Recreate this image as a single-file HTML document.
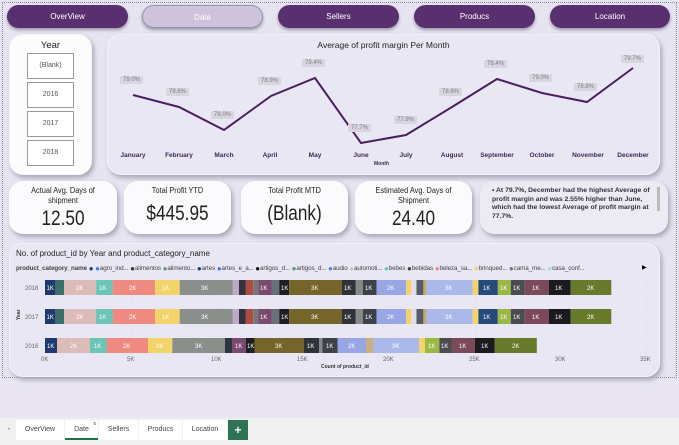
<!DOCTYPE html>
<html><head><meta charset="utf-8"><style>
*{margin:0;padding:0;box-sizing:border-box}
body{width:679px;height:445px;overflow:hidden;background:#e7e4f1;font-family:"Liberation Sans",sans-serif;position:relative}
.abs{position:absolute}
.page{left:2px;top:2px;width:675px;height:376px;border:1px dotted #8a8a95}
.nav{top:5px;height:23px;border-radius:12px;background:#592f6f;color:#fff;font-size:8px;text-align:center;line-height:23px;box-shadow:0 2px 3px #9a96a8}
.card{background:#eae7f4;border-radius:14px;box-shadow:2px 3px 5px #a9a6b6;border:1px solid #f4f3f9}
.kpi{background:#fbfbfd;border-radius:14px;box-shadow:2px 3px 5px #a9a6b6;top:181px;height:53px;text-align:center;color:#222}
.kpi .t{font-size:8px;margin-top:5px;line-height:10px;transform:scaleX(0.92)}
.kpi .v{font-size:21px;position:absolute;left:0;right:0;transform:scaleX(0.82)}
.yb{left:27px;width:47px;height:26px;border:1px solid #9a9a9a;background:#fff;font-size:7px;color:#555;text-align:center;line-height:24px}
.lbl{background:#d8d5df;color:#7a7a80;font-size:6px;padding:1px 3px;border-radius:1px}
.mon{font-size:6.5px;font-weight:bold;color:#3a2a55;top:152px;width:50px;text-align:center}
.tab{top:420px;height:20px;background:#fff;font-size:7px;color:#444;text-align:center;line-height:20px}
.lg{font-size:6.3px;color:#444;white-space:nowrap;letter-spacing:-0.1px}
.lg i{font-style:normal;font-size:8px;vertical-align:-1px}
</style></head><body>
<div class="abs" style="left:0;top:380px;width:679px;height:40px;background:#e9e6f2"></div>
<div class="abs" style="left:0;top:418px;width:679px;height:27px;background:#f1f0f0"></div>
<div class="abs page"></div>

<div class="abs nav" style="left:7px;width:121px">OverView</div>
<div class="abs nav" style="left:142px;width:121px;background:#cfc3dc;border:1px solid #8c9ab0">Date</div>
<div class="abs nav" style="left:278px;width:121px">Sellers</div>
<div class="abs nav" style="left:414px;width:121px">Producs</div>
<div class="abs nav" style="left:550px;width:120px">Location</div>

<div class="abs card" style="left:9px;top:34px;width:83px;height:141px;background:#fcfcfd">
<div style="text-align:center;font-size:9.5px;margin-top:5px;color:#222">Year</div></div>
<div class="abs yb" style="top:53px">(Blank)</div>
<div class="abs yb" style="top:82px">2016</div>
<div class="abs yb" style="top:111px">2017</div>
<div class="abs yb" style="top:140px">2018</div>

<div class="abs card" style="left:107px;top:34px;width:553px;height:141px"></div>
<div class="abs" style="left:107px;width:553px;top:40px;text-align:center;font-size:8.5px;color:#222">Average of profit margin Per Month</div>
<svg class="abs" style="left:0;top:0" width="679" height="180">
<polyline fill="none" stroke="#4a1f60" stroke-width="2" points="133,95 179,107 224,130 271,96 315,78 361,143 406,135 452,107 497,79 542,93 587,102 633,68"/>
</svg>
<div class="abs lbl" style="left:120px;top:76px">79.0%</div>
<div class="abs lbl" style="left:166px;top:88px">78.6%</div>
<div class="abs lbl" style="left:211px;top:111px">78.0%</div>
<div class="abs lbl" style="left:258px;top:77px">78.9%</div>
<div class="abs lbl" style="left:302px;top:59px">79.4%</div>
<div class="abs lbl" style="left:348px;top:124px">77.7%</div>
<div class="abs lbl" style="left:394px;top:116px">77.9%</div>
<div class="abs lbl" style="left:439px;top:88px">78.6%</div>
<div class="abs lbl" style="left:484px;top:60px">79.4%</div>
<div class="abs lbl" style="left:529px;top:74px">79.0%</div>
<div class="abs lbl" style="left:574px;top:83px">78.8%</div>
<div class="abs lbl" style="left:621px;top:55px">79.7%</div>
<div class="abs mon" style="left:108px">January</div>
<div class="abs mon" style="left:154px">February</div>
<div class="abs mon" style="left:199px">March</div>
<div class="abs mon" style="left:245px">April</div>
<div class="abs mon" style="left:290px">May</div>
<div class="abs mon" style="left:336px">June</div>
<div class="abs mon" style="left:381px">July</div>
<div class="abs mon" style="left:427px">August</div>
<div class="abs mon" style="left:472px">September</div>
<div class="abs mon" style="left:517px">October</div>
<div class="abs mon" style="left:563px">November</div>
<div class="abs mon" style="left:608px">December</div>
<div class="abs" style="left:374px;top:161px;font-size:5px;font-weight:bold;color:#3a2a55">Month</div>

<div class="abs kpi" style="left:9px;width:108px"><div class="t">Actual Avg. Days of<br>shipment</div><div class="v" style="top:26px">12.50</div></div>
<div class="abs kpi" style="left:124px;width:107px"><div class="t">Total Profit YTD</div><div class="v" style="top:21px">$445.95</div></div>
<div class="abs kpi" style="left:241px;width:107px"><div class="t">Total Profit MTD</div><div class="v" style="top:21px">(Blank)</div></div>
<div class="abs kpi" style="left:355px;width:117px"><div class="t">Estimated Avg. Days of<br>Shipment</div><div class="v" style="top:26px">24.40</div></div>
<div class="abs kpi" style="left:480px;width:188px;background:#eceaf3;text-align:left">
<div style="font-size:6.8px;font-weight:bold;color:#333;line-height:8.5px;margin:6px 18px 0 12px">• At 79.7%, December had the highest Average of profit margin and was 2.55% higher than June, which had the lowest Average of profit margin at 77.7%.</div>
<div class="abs" style="right:8px;top:6px;width:3px;height:24px;background:#bbb"></div></div>

<div class="abs card" style="left:9px;top:243px;width:651px;height:134px"></div>
<div class="abs" style="left:16px;top:249px;font-size:8px;color:#222">No. of product_id by Year and product_category_name</div>
<div class="abs lg" style="left:16px;top:264px"><b>product_category_name</b> <i style="color:#1f3b6e">●</i> <i style="color:#3b7be8">●</i>agro_ind... <i style="color:#333">●</i>alimentos <i style="color:#5a9a6a">●</i>alimento... <i style="color:#1f3b6e">●</i>artes <i style="color:#3b7be8">●</i>artes_e_a... <i style="color:#111">●</i>artigos_d... <i style="color:#5a9a6a">●</i>artigos_d... <i style="color:#5b84c4">●</i>audio <i style="color:#dcbcb8">●</i>automoti... <i style="color:#6cc6b8">●</i>bebes <i style="color:#444">●</i>bebidas <i style="color:#ee8a80">●</i>beleza_sa... <i style="color:#f2d46a">●</i>brinqued... <i style="color:#777">●</i>cama_me... <i style="color:#a8d8e8">●</i>casa_conf...</div>
<div class="abs" style="left:642px;top:264px;font-size:6px">▶</div>

<svg class="abs" style="left:0;top:0" width="679" height="380" font-family="Liberation Sans" font-size="6" fill="#fff">
<g stroke="#d0cde0" stroke-dasharray="1,2" stroke-width="0.5"><line x1="132" y1="275" x2="132" y2="356"/><line x1="218" y1="275" x2="218" y2="356"/><line x1="304" y1="275" x2="304" y2="356"/><line x1="390" y1="275" x2="390" y2="356"/><line x1="476" y1="275" x2="476" y2="356"/><line x1="562" y1="275" x2="562" y2="356"/><line x1="647" y1="275" x2="647" y2="356"/></g>
<defs>
<g id="r18">
<rect x="45" width="10.4" height="15" fill="#1f3b6e"/><rect x="55.4" width="8.7" height="15" fill="#3a6f6a"/>
<rect x="64.1" width="32" height="15" fill="#dcbcb8"/><rect x="96.1" width="16.5" height="15" fill="#6cc6b8"/>
<rect x="112.6" width="42.4" height="15" fill="#ee8a80"/><rect x="155" width="24.7" height="15" fill="#f2d46a"/>
<rect x="179.7" width="52.8" height="15" fill="#8a8f8c"/><rect x="232.5" width="6.5" height="15" fill="#c0a8c8"/>
<rect x="239" width="6.5" height="15" fill="#2e3540"/><rect x="245.5" width="7.7" height="15" fill="#b04a44"/>
<rect x="253.2" width="5.2" height="15" fill="#777"/><rect x="258.4" width="13.5" height="15" fill="#7a4a6e"/>
<rect x="271.9" width="7.3" height="15" fill="#6b6f77"/><rect x="279.2" width="10" height="15" fill="#1e1e22"/>
<rect x="289.2" width="52.8" height="15" fill="#75652a"/><rect x="342" width="13.8" height="15" fill="#2f3338"/>
<rect x="355.8" width="7" height="15" fill="#888"/><rect x="362.8" width="13.8" height="15" fill="#3d424a"/>
<rect x="376.6" width="29.4" height="15" fill="#98a6e6"/><rect x="406" width="5.3" height="15" fill="#f2d46a"/>
<rect x="411.3" width="5.2" height="15" fill="#e0dcea"/><rect x="416.5" width="6.9" height="15" fill="#555c66"/>
<rect x="423.4" width="3" height="15" fill="#c8a870"/><rect x="426.4" width="46.3" height="15" fill="#aab8ea"/>
<rect x="472.7" width="5.7" height="15" fill="#f2d46a"/><rect x="478.4" width="19.4" height="15" fill="#264a7a"/>
<rect x="497.8" width="13" height="15" fill="#9ab844"/><rect x="510.8" width="13.9" height="15" fill="#4a4c52"/>
<rect x="524.7" width="24.3" height="15" fill="#7b4a5a"/><rect x="549" width="21.6" height="15" fill="#1b1b1f"/>
<rect x="570.6" width="40.7" height="15" fill="#687a2c"/>
<g transform="translate(0,10)"><text x="46.5">1K</text><text x="76">2K</text><text x="99">1K</text><text x="129">2K</text><text x="162">1K</text><text x="201">3K</text><text x="260">1K</text><text x="281">1K</text><text x="311">3K</text><text x="344">1K</text><text x="365">1K</text><text x="387">2K</text><text x="445">3K</text><text x="483">1K</text><text x="500">1K</text><text x="513">1K</text><text x="532">1K</text><text x="555">1K</text><text x="587">2K</text></g>
</g></defs>
<use href="#r18" y="280"/><use href="#r18" y="309"/>
<g transform="translate(0,338)">
<rect x="45" width="12" height="15" fill="#1f3b6e"/><rect x="57" width="33" height="15" fill="#dcbcb8"/>
<rect x="90" width="16.5" height="15" fill="#6cc6b8"/><rect x="106.5" width="41.5" height="15" fill="#ee8a80"/>
<rect x="148" width="24.3" height="15" fill="#f2d46a"/><rect x="172.3" width="52.7" height="15" fill="#8a8f8c"/>
<rect x="225" width="7" height="15" fill="#2e3540"/><rect x="232" width="14" height="15" fill="#7a4a6e"/>
<rect x="246" width="8.5" height="15" fill="#1e1e22"/><rect x="254.5" width="49.5" height="15" fill="#75652a"/>
<rect x="304" width="15" height="15" fill="#2f3338"/><rect x="319" width="3.5" height="15" fill="#888"/>
<rect x="322.5" width="15.2" height="15" fill="#3d424a"/><rect x="337.7" width="28.3" height="15" fill="#98a6e6"/>
<rect x="366" width="7" height="15" fill="#c8b080"/><rect x="373" width="46" height="15" fill="#aab8ea"/>
<rect x="419" width="6" height="15" fill="#f2d46a"/><rect x="425" width="14.4" height="15" fill="#9ab844"/>
<rect x="439.4" width="12.1" height="15" fill="#4a4c52"/><rect x="451.5" width="23.5" height="15" fill="#7b4a5a"/>
<rect x="475" width="19.8" height="15" fill="#1b1b1f"/><rect x="494.8" width="42" height="15" fill="#687a2c"/>
<g transform="translate(0,10)"><text x="47">1K</text><text x="70">2K</text><text x="94">1K</text><text x="123">2K</text><text x="156">1K</text><text x="195">3K</text><text x="235">1K</text><text x="247">1K</text><text x="275">3K</text><text x="307">1K</text><text x="326">1K</text><text x="348">2K</text><text x="392">3K</text><text x="428">1K</text><text x="441">1K</text><text x="459">1K</text><text x="481">1K</text><text x="512">2K</text></g>
</g>
<g fill="#666" font-size="6"><text x="25" y="290">2018</text><text x="25" y="319">2017</text><text x="25" y="348">2016</text>
<text x="41" y="361">0K</text><text x="127" y="361">5K</text><text x="211" y="361">10K</text><text x="297" y="361">15K</text><text x="383" y="361">20K</text><text x="469" y="361">25K</text><text x="555" y="361">30K</text><text x="640" y="361">35K</text></g>
<text x="321" y="368" fill="#333" font-size="5" font-weight="bold">Count of product_id</text>
<text x="20" y="320" fill="#333" font-size="5" font-weight="bold" transform="rotate(-90 20 320)">Year</text>
</svg>

<div class="abs" style="left:8px;top:426px;font-size:5px;color:#aaa">▸</div>
<div class="abs tab" style="left:16px;width:48px">OverView</div>
<div class="abs tab" style="left:65px;width:33px;border-bottom:2px solid #217346">Date<span style="position:absolute;right:2px;top:-6px;font-size:5px">x</span></div>
<div class="abs tab" style="left:99px;width:39px">Sellers</div>
<div class="abs tab" style="left:139px;width:43px">Producs</div>
<div class="abs tab" style="left:183px;width:44px">Location</div>
<div class="abs tab" style="left:228px;width:20px;background:#2f7356;color:#fff;font-size:12px;font-weight:bold">+</div>
</body></html>
